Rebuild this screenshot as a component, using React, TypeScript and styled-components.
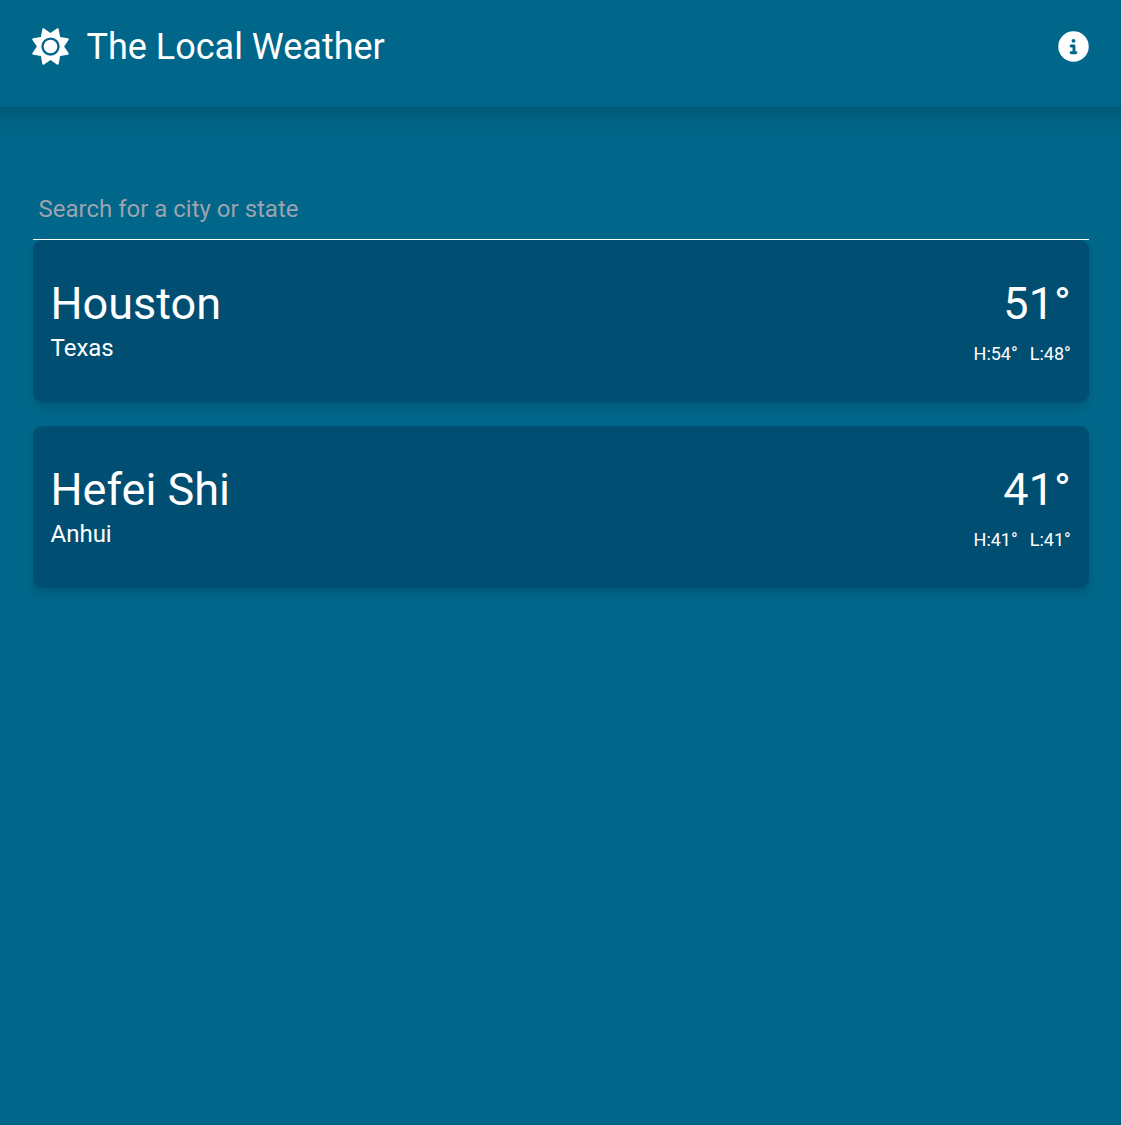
import React from "react";
import styled, { createGlobalStyle } from "styled-components";
import { FaSun, FaCircleInfo } from "react-icons/fa6";

const GlobalStyle = createGlobalStyle`
  * { box-sizing: border-box; }
  body { margin: 0; min-height: 100vh; background: #00668a; color: #fff; font-family: Roboto, sans-serif; font-size: 24px; line-height: 36px; }
  p, h1, h2 { margin: 0; font-weight: 400; }
`;
const Header = styled.header`
  height: 107px;
  background: #00668a;
  box-shadow: 0 15px 22.5px -4.5px rgba(0, 0, 0, 0.1), 0 6px 9px -6px rgba(0, 0, 0, 0.1);
  margin: 0 -40px;
  padding: 0 40px;
`;
const Page = styled.div`
  overflow-x: clip;
`;
const Nav = styled.nav`
  display: flex;
  justify-content: space-between;
  align-items: center;
  height: 93px;
  padding: 0 32px;
`;
const Brand = styled.div`
  display: flex;
  align-items: center;
  gap: 17.5px;
`;
const SunIcon = styled(FaSun)`
  width: 37px;
  height: 37px;
  padding: 0.25px;
`;
const InfoIcon = styled(FaCircleInfo)`
  width: 31px;
  height: 31px;
  padding: 0.25px;
`;
const Title = styled.h1`
  font-size: 36px;
  line-height: 42px;
`;
const Main = styled.main`
  padding: 71px 32.5px 0;
`;
const Search = styled.input`
  display: block;
  width: 100%;
  height: 62px;
  padding: 0 6px;
  border: 0;
  border-bottom: 1px solid #fff;
  background: transparent;
  color: #fff;
  font: 24px Roboto, sans-serif;
  outline: none;
  &::placeholder { color: #9ca3af; }
`;
const List = styled.div`
  display: flex;
  flex-direction: column;
  gap: 24px;
`;
const Card = styled.article`
  display: flex;
  justify-content: space-between;
  height: 162px;
  padding: 37px 17.75px 35px 18px;
  border-radius: 9px;
  background: #004e71;
  box-shadow: 0 6px 9px -1.5px rgba(0, 0, 0, 0.1), 0 3px 6px -3px rgba(0, 0, 0, 0.1);
`;
const Column = styled.div<{ $end?: boolean }>`
  display: flex;
  flex-direction: column;
  align-items: ${(p) => (p.$end ? "flex-end" : "flex-start")};
`;
const Large = styled.h2`
  font-size: 45px;
  line-height: 54px;
`;
const Region = styled.p`
  line-height: 34px;
`;
const Range = styled.p`
  display: flex;
  gap: 12px;
  padding-top: 9px;
  font-size: 18px;
  line-height: 27px;
`;

const cities = [
  { name: "Houston", region: "Texas", temp: 51, high: 54, low: 48 },
  { name: "Hefei Shi", region: "Anhui", temp: 41, high: 41, low: 41 },
];

export default function App() {
  return (
    <Page>
      <GlobalStyle />
      <Header>
        <Nav>
          <Brand>
            <SunIcon />
            <Title>The Local Weather</Title>
          </Brand>
          <InfoIcon />
        </Nav>
      </Header>
      <Main>
        <Search placeholder="Search for a city or state" />
        <List>
          {cities.map((c) => (
            <Card key={c.name}>
              <Column>
                <Large>{c.name}</Large>
                <Region>{c.region}</Region>
              </Column>
              <Column $end>
                <Large>{c.temp}°</Large>
                <Range>
                  <span>H:{c.high}°</span>
                  <span>L:{c.low}°</span>
                </Range>
              </Column>
            </Card>
          ))}
        </List>
      </Main>
    </Page>
  );
}
